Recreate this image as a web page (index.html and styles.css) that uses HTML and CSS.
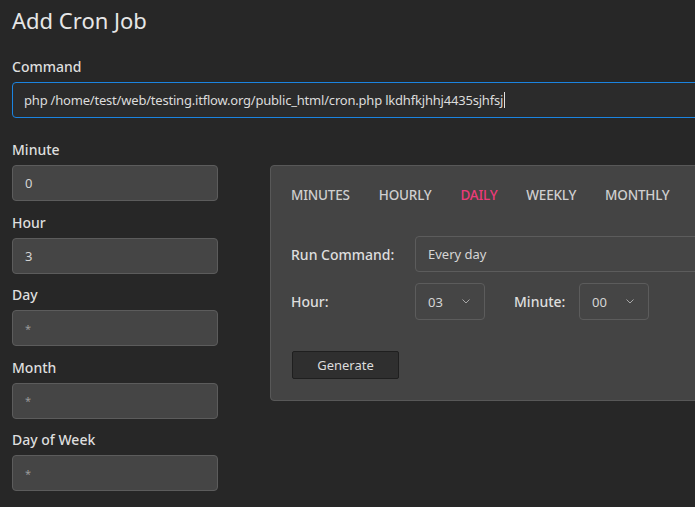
FILE: index.html
```html
<!DOCTYPE html>
<html>
<head>
<meta charset="utf-8">
<link rel="stylesheet" href="styles.css">
</head>
<body>
<div class="page">
  <h1 class="title">Add Cron Job</h1>
  <div class="field">
    <label class="label">Command</label>
    <div class="cmd-input">php /home/test/web/testing.itflow.org/public_html/cron.php lkdhfkjhhj4435sjhfsj<span class="caret"></span></div>
  </div>
  <div class="row">
    <div class="left">
      <div class="field small">
        <label class="label">Minute</label>
        <div class="input">0</div>
      </div>
      <div class="field small">
        <label class="label">Hour</label>
        <div class="input">3</div>
      </div>
      <div class="field small">
        <label class="label">Day</label>
        <div class="input ph">*</div>
      </div>
      <div class="field small">
        <label class="label">Month</label>
        <div class="input ph">*</div>
      </div>
      <div class="field small">
        <label class="label">Day of Week</label>
        <div class="input ph">*</div>
      </div>
    </div>
    <div class="right">
      <div class="panel">
        <div class="tabs">
          <span class="tab">MINUTES</span>
          <span class="tab">HOURLY</span>
          <span class="tab active">DAILY</span>
          <span class="tab">WEEKLY</span>
          <span class="tab">MONTHLY</span>
        </div>
        <div class="form-row">
          <span class="flabel">Run Command:</span>
          <div class="select wide">Every day</div>
        </div>
        <div class="form-row">
          <span class="flabel">Hour:</span>
          <div class="select narrow">03<svg class="chev" width="8" height="5" viewBox="0 0 8 5"><polyline points="0.5,0.5 4,4 7.5,0.5" fill="none" stroke="#a8a8a8" stroke-width="1"/></svg></div>
          <span class="flabel minute">Minute:</span>
          <div class="select narrow">00<svg class="chev" width="8" height="5" viewBox="0 0 8 5"><polyline points="0.5,0.5 4,4 7.5,0.5" fill="none" stroke="#a8a8a8" stroke-width="1"/></svg></div>
        </div>
        <div class="actions">
          <button class="btn">Generate</button>
        </div>
      </div>
    </div>
  </div>
</div>
</body>
</html>
```

FILE: styles.css
```css
* { box-sizing: border-box; }
html, body { margin: 0; padding: 0; }
body {
  background: #272727;
  color: #e2e2e2;
  font-family: "Noto Sans", "DejaVu Sans", sans-serif;
  width: 695px;
  height: 507px;
  overflow: hidden;
}
.page {
  padding: 4px 0 0 12px;
  width: 695px;
  height: 507px;
  overflow: hidden;
}
.title {
  font-size: 22px;
  font-weight: 400;
  margin: 0 0 21px 0;
  line-height: 32px;
  color: #e6e6e6;
}
.field { display: flex; flex-direction: column; }
.label {
  font-size: 14px;
  font-weight: 500;
  line-height: 20px;
  margin-bottom: 5px;
  color: #dedede;
}
.cmd-input {
  height: 36px;
  border: 1px solid #1b84e0;
  border-radius: 4px;
  background: #2b2b2b;
  padding: 0 11px;
  display: flex;
  align-items: center;
  font-size: 13px;
  color: #dcdcdc;
  letter-spacing: -0.2px;
  width: 740px;
  margin-bottom: 22px;
  flex-shrink: 0;
}
.caret {
  display: inline-block;
  width: 1px;
  height: 16px;
  background: #e0e0e0;
  margin-left: 1px;
}
.row { display: flex; gap: 52px; width: 760px; }
.left { width: 206px; flex-shrink: 0; display: flex; flex-direction: column; gap: 11.5px; }
.small .label { margin-bottom: 5px; }
.input {
  height: 36px;
  background: #454545;
  border: 1px solid #5c5c5c;
  border-radius: 4px;
  padding: 0 12px;
  display: flex;
  align-items: center;
  font-size: 13px;
  color: #d4d4d4;
}
.input.ph { color: #9a9a9a; font-size: 11px; }
.right { padding-top: 25px; flex: 1; }
.panel {
  background: #444444;
  border: 1px solid #585858;
  border-radius: 4px;
  padding: 18px 20px 21px 20px;
  height: 236px;
}
.tabs {
  display: flex;
  gap: 29px;
  font-size: 13.5px;
  color: #cfcfcf;
  line-height: 22px;
  margin-bottom: 30px;
  font-weight: 500;
  letter-spacing: -0.2px;
}
.tab.active { color: #ec3b7a; }
.form-row {
  display: flex;
  align-items: center;
  margin-bottom: 11px;
}
.flabel {
  width: 124px;
  font-size: 14px;
  font-weight: 500;
  color: #dedede;
}
.flabel.minute { width: 65px; margin-left: 29px; }
.select {
  height: 37px;
  border: 1px solid #5c5c5c;
  border-radius: 4px;
  background: #454545;
  display: flex;
  align-items: center;
  padding: 0 12px;
  font-size: 13px;
  color: #d6d6d6;
}
.select.wide { width: 400px; height: 36px; }
.select.narrow { width: 70px; justify-content: space-between; padding-right: 14px; }
.chev { display: block; }
.actions { padding-top: 20px; }
.btn {
  width: 107px;
  height: 28px;
  background: #2f2f2f;
  border: 1px solid #1f1f1f;
  border-radius: 2px;
  color: #dcdcdc;
  font-family: inherit;
  font-size: 13px;
  padding: 0;
  margin-left: 1px;
}
```
